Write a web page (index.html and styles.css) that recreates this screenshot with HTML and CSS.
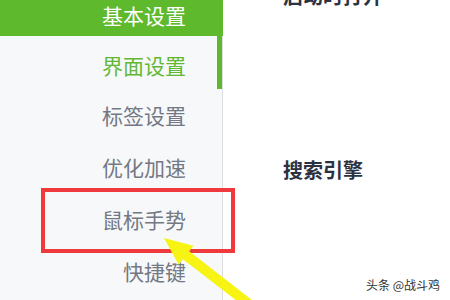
FILE: index.html
```html
<!DOCTYPE html>
<html lang="zh">
<head>
<meta charset="utf-8">
<link rel="stylesheet" href="styles.css">
</head>
<body>
<div class="page">
  <nav class="sidebar">
    <div class="item active">基本设置</div>
    <div class="item current">界面设置</div>
    <div class="item">标签设置</div>
    <div class="item">优化加速</div>
    <div class="item">鼠标手势</div>
    <div class="item">快捷键</div>
  </nav>
  <main class="content">
    <h2 class="heading first">启动时打开</h2>
    <h2 class="heading second">搜索引擎</h2>
  </main>
  <div class="highlight"></div>
  <svg class="arrow" width="450" height="300" viewBox="0 0 450 300">
    <polygon points="164,238 193.5,245.7 189.2,251.3 261.9,307.7 255.7,315.5 183,259.2 178.7,264.7" fill="#f7f414"/>
  </svg>
  <div class="watermark">头条 @战斗鸡</div>
</div>
</body>
</html>
```
FILE: styles.css
```css
html, body {
  margin: 0;
  padding: 0;
  background: #ffffff;
}
body {
  font-family: "Noto Sans CJK SC", "Noto Sans", sans-serif;
}
.page {
  position: relative;
  width: 450px;
  height: 300px;
  overflow: hidden;
  display: flex;
}
.sidebar {
  width: 222px;
  flex: none;
  background: #f7f8fa;
  border-right: 1px solid #dcdee2;
  display: flex;
  flex-direction: column;
}
.item {
  height: 52px;
  box-sizing: border-box;
  display: flex;
  align-items: center;
  justify-content: flex-end;
  padding-right: 36px;
  font-size: 21px;
  line-height: 22px;
  color: #737884;
}
.item.active {
  height: 36px;
  padding-bottom: 6px;
  margin-right: -1px;
  padding-right: 37px;
  background: #5eb92d;
  color: #ffffff;
}
.item.current {
  height: 53px;
  padding-top: 5px;
  padding-right: 31px;
  color: #62b834;
  border-right: 5px solid #5eb92d;
}
.content {
  flex: 1;
  padding-left: 60px;
  display: flex;
  flex-direction: column;
}
.heading {
  margin: 0;
  font-size: 20px;
  line-height: 20px;
  font-weight: bold;
  color: #2c3242;
}
.heading.first {
  margin-top: -14px;
}
.heading.second {
  margin-top: 154px;
}
.highlight {
  position: absolute;
  left: 41px;
  top: 188px;
  width: 186px;
  height: 57px;
  border: 4px solid #ef3a3d;
}
.arrow {
  position: absolute;
  left: 0;
  top: 0;
}
.watermark {
  position: absolute;
  right: 10px;
  bottom: 8px;
  font-size: 12px;
  line-height: 14px;
  color: #333333;
  text-shadow: 0 0 2px #ffffff;
}
```
